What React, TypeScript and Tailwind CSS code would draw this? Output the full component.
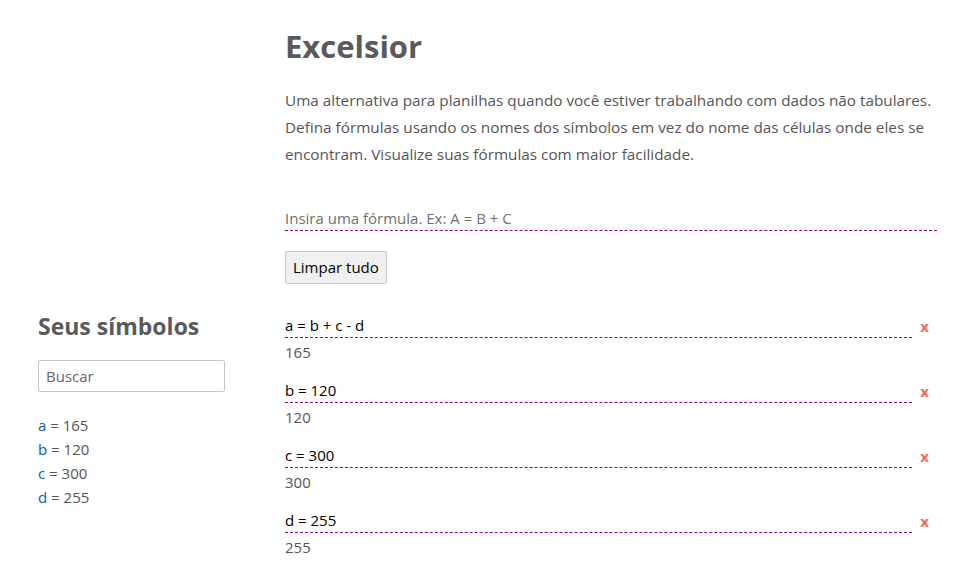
import { useState } from "react";

const FORMULAS = [
  { text: "a = b + c - d", value: 165 },
  { text: "b = 120", value: 120 },
  { text: "c = 300", value: 300 },
  { text: "d = 255", value: 255 },
];

const SYMBOLS = [
  { name: "a", value: 165 },
  { name: "b", value: 120 },
  { name: "c", value: 300 },
  { name: "d", value: 255 },
];

export default function App() {
  const [query, setQuery] = useState("");
  const [formula, setFormula] = useState("");

  return (
    <div className="min-h-screen bg-white px-[38px] text-[#555] font-['Open_Sans',sans-serif]">
      <div className="grid grid-cols-[247px_1fr]">
        {/* Header */}
        <div />
        <div className="pt-[26px]">
          <h1 className="text-[31px] leading-[40px] font-bold text-[#5a5a5a]">Excelsior</h1>
          <p className="mt-[21px] text-[15.3px] leading-[27px]">
            Uma alternativa para planilhas quando você estiver trabalhando com dados não tabulares.
            <br />
            Defina fórmulas usando os nomes dos símbolos em vez do nome das células onde eles se
            <br />
            encontram. Visualize suas fórmulas com maior facilidade.
          </p>
          <input
            value={formula}
            onChange={(e) => setFormula(e.target.value)}
            placeholder="Insira uma fórmula. Ex: A = B + C"
            className="mt-[37px] block w-full h-[26px] border-b border-dashed border-[#8b008b] bg-transparent text-[15px] text-black placeholder:text-[#6f6f6f] outline-none"
          />
          <button
            type="button"
            className="mt-[20px] h-[33px] px-[7px] rounded-[2px] border border-[#c8c8c8] bg-[#f0f0f0] text-[15px] text-black"
          >
            Limpar tudo
          </button>
        </div>

        {/* Sidebar */}
        <div className="pt-[26px]">
          <h2 className="text-[23px] leading-[32px] font-bold text-[#5a5a5a]">Seus símbolos</h2>
          <input
            value={query}
            onChange={(e) => setQuery(e.target.value)}
            placeholder="Buscar"
            className="mt-[18px] block w-[187px] h-[32px] px-[7px] rounded-[2px] border border-[#c8c8c8] text-[15px] text-black placeholder:text-[#666] outline-none"
          />
          <ul className="mt-[21px] text-[15px] leading-[24px]">
            {SYMBOLS.filter((s) => s.name.includes(query)).map((s) => (
              <li key={s.name}>
                <span className="text-[#0b5cad]">{s.name}</span> = {s.value}
              </li>
            ))}
          </ul>
        </div>

        {/* Formula list */}
        <div className="pt-[29px]">
          {FORMULAS.map((f) => (
            <div key={f.text} className="mb-[13px]">
              <div className="flex items-center">
                <div className="flex-1 h-[25px] border-b border-dashed border-[#8b008b] text-[15px] leading-[24px] text-black">
                  {f.text}
                </div>
                <span className="w-[25px] text-center text-[15px] font-bold leading-[24px] text-[#f26b4f]">x</span>
              </div>
              <div className="h-[27px] text-[15px] leading-[28px]">{f.value}</div>
            </div>
          ))}
        </div>
      </div>
    </div>
  );
}
